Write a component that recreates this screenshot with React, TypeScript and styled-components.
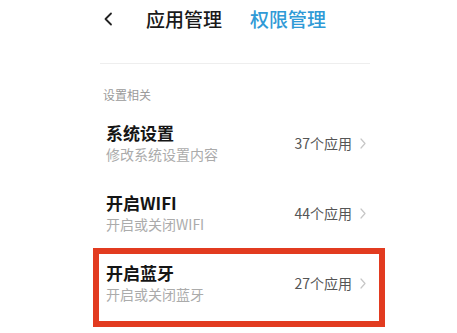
import React from "react";
import styled, { createGlobalStyle } from "styled-components";

const GlobalStyle = createGlobalStyle`
  html, body { margin: 0; padding: 0; background: #ffffff; }
  body { font-family: "Noto Sans CJK SC", "Noto Sans", sans-serif; width: 457px; height: 333px; overflow: hidden; }
`;

const Page = styled.div`
  width: 457px;
  height: 333px;
  display: flex;
  flex-direction: column;
  background: #fff;
`;

const Header = styled.div`
  display: flex;
  align-items: center;
  height: 37px;
  padding-left: 103px;
`;

const Back = styled.svg`
  width: 10px;
  height: 14px;
  margin-right: 33px;
  flex: none;
`;

const Tab = styled.div<{ $active?: boolean }>`
  font-size: 19px;
  line-height: 37px;
  font-weight: 500;
  color: ${(p) => (p.$active ? "#2f9ad6" : "#1a1a1a")};
  margin-right: 28px;
`;

const Divider = styled.div`
  height: 1px;
  background: #eeeeee;
  margin: 26px 87px 0 100px;
`;

const SectionLabel = styled.div`
  font-size: 12px;
  line-height: 17px;
  color: #9a9a9a;
  margin: 22px 0 0 103px;
`;

const List = styled.div`
  display: flex;
  flex-direction: column;
  margin: 5px 0 0 93px;
  width: 292px;
`;

const Row = styled.div<{ $highlighted?: boolean }>`
  display: flex;
  align-items: center;
  border: 6px solid ${(p) => (p.$highlighted ? "#e23b20" : "transparent")};
  padding: 8px 13px ${(p) => (p.$highlighted ? 17 : 8)}px 7px;
`;

const Texts = styled.div`
  flex: 1;
  display: flex;
  flex-direction: column;
`;

const Title = styled.div`
  font-size: 17px;
  line-height: 22px;
  font-weight: 700;
  color: #151515;
`;

const Subtitle = styled.div`
  font-size: 14px;
  line-height: 20px;
  color: #ababab;
`;

const Meta = styled.div`
  font-size: 14px;
  line-height: 20px;
  color: #555555;
  margin-right: 8px;
`;

const Chevron = styled.svg`
  width: 6px;
  height: 11px;
  flex: none;
`;

const items = [
  { title: "系统设置", sub: "修改系统设置内容", count: "37个应用" },
  { title: "开启WIFI", sub: "开启或关闭WIFI", count: "44个应用" },
  { title: "开启蓝牙", sub: "开启或关闭蓝牙", count: "27个应用", hl: true },
];

export default function App() {
  return (
    <>
      <GlobalStyle />
      <Page>
        <Header>
          <Back viewBox="0 0 10 14">
            <polyline points="8,1.5 2.5,7 8,12.5" fill="none" stroke="#222" strokeWidth="1.8" strokeLinecap="round" strokeLinejoin="round" />
          </Back>
          <Tab>应用管理</Tab>
          <Tab $active>权限管理</Tab>
        </Header>
        <Divider />
        <SectionLabel>设置相关</SectionLabel>
        <List>
          {items.map((it) => (
            <Row key={it.title} $highlighted={it.hl}>
              <Texts>
                <Title>{it.title}</Title>
                <Subtitle>{it.sub}</Subtitle>
              </Texts>
              <Meta>{it.count}</Meta>
              <Chevron viewBox="0 0 6 11">
                <polyline points="1,1 5,5.5 1,10" fill="none" stroke="#c6c6c6" strokeWidth="1.2" strokeLinecap="round" strokeLinejoin="round" />
              </Chevron>
            </Row>
          ))}
        </List>
      </Page>
    </>
  );
}
